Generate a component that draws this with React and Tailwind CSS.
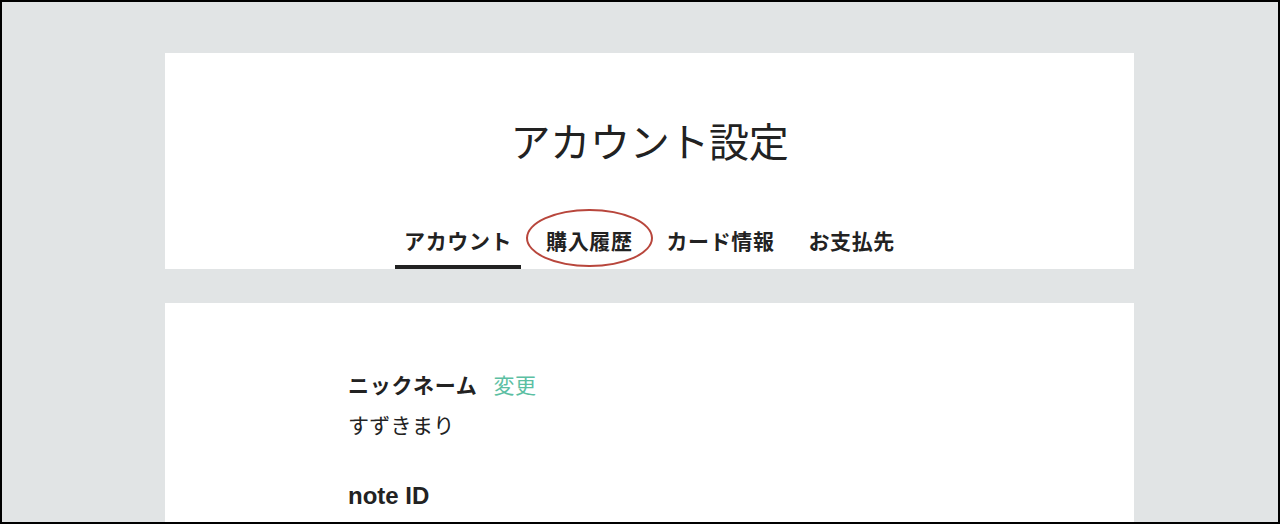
import React from "react";

const tabs = ["アカウント", "購入履歴", "カード情報", "お支払先"];

export default function App() {
  return (
    <div
      className="h-[524px] w-[1280px] overflow-hidden border-2 border-black bg-[#e1e4e5] text-[#222]"
      style={{ fontFamily: '"Noto Sans CJK JP", "Noto Sans", sans-serif' }}
    >
      <div className="ml-[163px] w-[969px] pt-[51px]">
        {/* header card */}
        <div className="flex h-[216px] flex-col items-center bg-white pt-[67px]">
          <h1 className="text-[40px] font-normal leading-[40px] tracking-[-0.3px]">
            アカウント設定
          </h1>
          <ul className="mt-[70px] flex gap-[16px]">
            {tabs.map((t, i) => (
              <li key={t} className="relative">
                <div
                  className={
                    "px-[9px] pb-[14px] text-[21px] font-bold leading-[21px] tracking-[0.6px] border-b-4 " +
                    (i === 0 ? "border-[#222]" : "border-transparent")
                  }
                >
                  {t}
                </div>
                {i === 1 && (
                  <div className="absolute left-[-11px] right-[-11px] top-[-21px] bottom-[2px] rounded-[50%] border-[2.5px] border-[#b8463c]" />
                )}
              </li>
            ))}
          </ul>
        </div>

        {/* account card */}
        <div className="mt-[34px] h-[300px] bg-white pl-[183px] pt-[71px]">
          <div className="flex items-center gap-[16px] text-[21px] leading-[21px]">
            <span className="font-bold tracking-[0.7px]">ニックネーム</span>
            <span className="text-[#5cbfa3] tracking-[0.5px]">変更</span>
          </div>
          <p className="mt-[19px] text-[21px] leading-[21px] tracking-[0.3px]">すずきまり</p>
          <p
            className="mt-[49px] text-[24px] font-bold leading-[24px]"
            style={{ fontFamily: '"Liberation Sans", Arial, sans-serif' }}
          >
            note ID
          </p>
        </div>
      </div>
    </div>
  );
}
